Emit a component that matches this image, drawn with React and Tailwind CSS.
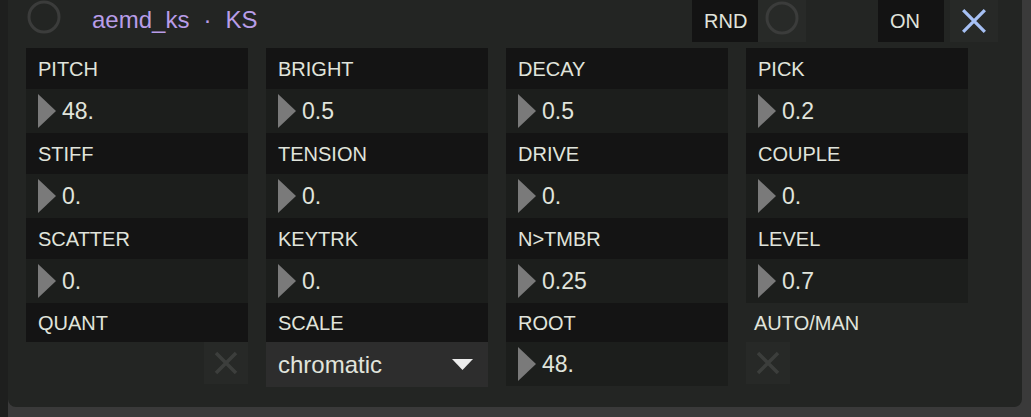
import React from "react";

// Param grid data, row by row
const rows = [
  [
    { label: "PITCH", value: "48." },
    { label: "BRIGHT", value: "0.5" },
    { label: "DECAY", value: "0.5" },
    { label: "PICK", value: "0.2" },
  ],
  [
    { label: "STIFF", value: "0." },
    { label: "TENSION", value: "0." },
    { label: "DRIVE", value: "0." },
    { label: "COUPLE", value: "0." },
  ],
  [
    { label: "SCATTER", value: "0." },
    { label: "KEYTRK", value: "0." },
    { label: "N>TMBR", value: "0.25" },
    { label: "LEVEL", value: "0.7" },
  ],
];

const Ring = () => (
  <svg width="34" height="34" viewBox="0 0 34 34">
    <circle cx="17" cy="17" r="15" fill="none" stroke="#3b3c3b" strokeWidth="3" />
  </svg>
);

const Arrow = () => (
  <svg width="18" height="34" viewBox="0 0 18 34" className="shrink-0">
    <polygon points="0,0 18,17 0,34" fill="#7a7a7a" />
  </svg>
);

const Cross = ({ color, size, stroke }) => (
  <svg width={size} height={size} viewBox="0 0 24 24">
    <path d="M2 2 L22 22 M22 2 L2 22" stroke={color} strokeWidth={stroke} strokeLinecap="butt" />
  </svg>
);

const Label = ({ children, bare, short }) => (
  <div
    className={`flex items-center text-[20px] text-[#e0e4dc] ${short ? "h-[39px]" : "h-[41px]"} ${
      bare ? "pl-2" : "pl-3 bg-[#141414]"
    }`}
  >
    {children}
  </div>
);

const Value = ({ children }) => (
  <div className="h-[44px] bg-[#1c1e1c] flex items-center pl-3 gap-[6px] text-[23px] text-[#e0e4dc]">
    <Arrow />
    <span className="leading-none">{children}</span>
  </div>
);

const CheckBox = () => (
  <div className="w-[44px] h-[42px] bg-[#272927] flex items-center justify-center">
    <Cross color="#3c3e3c" size={24} stroke={3.5} />
  </div>
);

const App = () => {
  return (
    <div
      className="w-[1031px] h-[417px] bg-[#3a3a3a] flex overflow-hidden"
      style={{ fontFamily: '"Liberation Sans", Arial, sans-serif' }}
    >
      <div className="w-[8px] h-full bg-[#1e1f1e]" />
      <div className="w-[1014px] h-[407px] bg-[#232523] rounded-b-[8px] pl-[18px] flex flex-col">
        {/* header */}
        <div className="h-[42px] flex items-start">
          <div className="ml-[1px]">
            <Ring />
          </div>
          <div className="ml-[31px] mt-[2px] flex gap-[14px] text-[24px] text-[#b89de8]">
            <span>aemd_ks</span>
            <span>·</span>
            <span>KS</span>
          </div>
          <div className="ml-auto flex">
            <div className="w-[66px] h-[42px] bg-[#131313] flex items-center pl-3 text-[20px] text-[#e0e4dc]">
              RND
            </div>
            <div className="w-[48px] h-[42px] bg-[#282a28] flex justify-center pt-[1px]">
              <Ring />
            </div>
            <div className="w-[66px] h-[42px] bg-[#131313] flex items-center pl-3 text-[20px] text-[#e0e4dc] ml-[72px]">
              ON
            </div>
            <div className="w-[48px] h-[42px] bg-[#272927] flex items-center justify-center ml-[6px]">
              <Cross color="#a6c0f4" size={26} stroke={3} />
            </div>
            <div className="w-[24px]" />
          </div>
        </div>

        {/* params */}
        <div className="mt-[6px] grid grid-cols-[repeat(4,222px)] gap-x-[18px]">
          {rows.map((row) =>
            row.map((cell) => (
              <div key={cell.label} className="flex flex-col">
                <Label>{cell.label}</Label>
                <Value>{cell.value}</Value>
              </div>
            ))
          )}

          <div className="flex flex-col">
            <Label short>QUANT</Label>
            <div className="flex justify-end">
              <CheckBox />
            </div>
          </div>
          <div className="flex flex-col">
            <Label short>SCALE</Label>
            <div className="h-[45px] bg-[#2d2d2d] flex items-center justify-between pl-3 pr-[15px] text-[24px] text-[#e0e4dc]">
              <span>chromatic</span>
              <svg width="21" height="11" viewBox="0 0 21 11">
                <polygon points="0,0 21,0 10.5,11" fill="#ececec" />
              </svg>
            </div>
          </div>
          <div className="flex flex-col">
            <Label short>ROOT</Label>
            <Value>48.</Value>
          </div>
          <div className="flex flex-col">
            <Label bare short>AUTO/MAN</Label>
            <div className="flex">
              <CheckBox />
            </div>
          </div>
        </div>
      </div>
    </div>
  );
};

export default App;
